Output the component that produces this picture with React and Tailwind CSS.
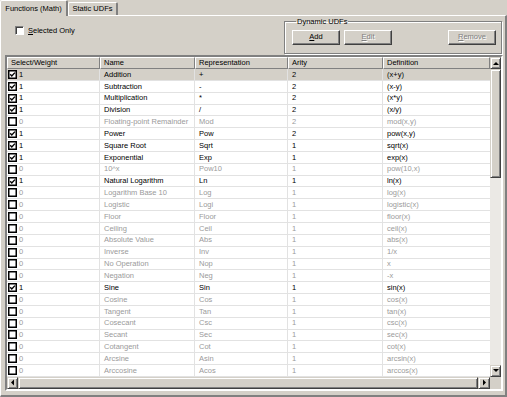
import React from "react";

const rows = [
  [1, "Addition", "+", 2, "(x+y)"],
  [1, "Subtraction", "-", 2, "(x-y)"],
  [1, "Multiplication", "*", 2, "(x*y)"],
  [1, "Division", "/", 2, "(x/y)"],
  [0, "Floating-point Remainder", "Mod", 2, "mod(x,y)"],
  [1, "Power", "Pow", 2, "pow(x,y)"],
  [1, "Square Root", "Sqrt", 1, "sqrt(x)"],
  [1, "Exponential", "Exp", 1, "exp(x)"],
  [0, "10^x", "Pow10", 1, "pow(10,x)"],
  [1, "Natural Logarithm", "Ln", 1, "ln(x)"],
  [0, "Logarithm Base 10", "Log", 1, "log(x)"],
  [0, "Logistic", "Logi", 1, "logistic(x)"],
  [0, "Floor", "Floor", 1, "floor(x)"],
  [0, "Ceiling", "Ceil", 1, "ceil(x)"],
  [0, "Absolute Value", "Abs", 1, "abs(x)"],
  [0, "Inverse", "Inv", 1, "1/x"],
  [0, "No Operation", "Nop", 1, "x"],
  [0, "Negation", "Neg", 1, "-x"],
  [1, "Sine", "Sin", 1, "sin(x)"],
  [0, "Cosine", "Cos", 1, "cos(x)"],
  [0, "Tangent", "Tan", 1, "tan(x)"],
  [0, "Cosecant", "Csc", 1, "csc(x)"],
  [0, "Secant", "Sec", 1, "sec(x)"],
  [0, "Cotangent", "Cot", 1, "cot(x)"],
  [0, "Arcsine", "Asin", 1, "arcsin(x)"],
  [0, "Arccosine", "Acos", 1, "arccos(x)"],
];

const cols = "grid grid-cols-[93px_95px_93px_95px_107px]";

function Check({ on }) {
  return (
    <svg width="9" height="9" viewBox="0 0 9 9" className="shrink-0">
      <rect x="0.75" y="0.75" width="7.5" height="7.5" fill="#fff" stroke="#000" strokeWidth="1.5" />
      {on ? <path d="M2.2 4.3 L3.8 6 L6.9 2.6" fill="none" stroke="#000" strokeWidth="1.4" /> : null}
    </svg>
  );
}

function Arrow({ dir }) {
  const d = {
    up: "M1 4 L4 1 L7 4 Z",
    down: "M1 1 L4 4 L7 1 Z",
    left: "M4 0.5 L1 3.5 L4 6.5 Z",
    right: "M1 0.5 L4 3.5 L1 6.5 Z",
  }[dir];
  const w = dir === "up" || dir === "down" ? 8 : 5;
  const h = dir === "up" || dir === "down" ? 5 : 7;
  return (
    <svg width={w} height={h} viewBox={`0 0 ${w} ${h}`}>
      <path d={d} fill="#000" />
    </svg>
  );
}

function SbButton({ dir, className = "" }) {
  return (
    <div
      className={`flex items-center justify-center bg-[#d4d0c8] border border-t-[#d4d0c8] border-l-[#d4d0c8] border-b-[#404040] border-r-[#404040] shadow-[inset_1px_1px_0_#fff,inset_-1px_-1px_0_#808080] ${className}`}
    >
      <Arrow dir={dir} />
    </div>
  );
}

function Button({ children, disabled }) {
  return (
    <button
      className={`w-[48px] h-[15px] flex items-center justify-center bg-[#d4d0c8] border border-t-white border-l-white border-b-[#404040] border-r-[#404040] shadow-[inset_-1px_-1px_0_#808080] ${
        disabled ? "text-[#808080] [text-shadow:1px_1px_0_#fff]" : "text-black"
      }`}
    >
      {children}
    </button>
  );
}

export default function App() {
  return (
    <div className="w-[507px] h-[397px] bg-[#d4d0c8] flex flex-col overflow-hidden font-['Liberation_Sans',Arial,sans-serif] text-[7.5px] leading-none text-black">
      {/* tabs */}
      <div className="h-[15px] flex items-end">
        <div className="relative z-10 w-[68px] h-[16px] -mb-[1px] flex items-center justify-center bg-[#d4d0c8] border-l border-t border-white border-r-2 border-r-[#808080] rounded-t-[2px]">
          Functions (Math)
        </div>
        <div className="w-[50px] h-[13px] flex items-center justify-center bg-[#d4d0c8] border-l border-t border-white border-r-2 border-r-[#808080] rounded-t-[2px]">
          Static UDFs
        </div>
      </div>

      {/* tab page */}
      <div className="flex-1 flex flex-col border-t border-l border-white border-r-2 border-b-2 border-r-[#808080] border-b-[#808080] pl-[4px] pr-[2px]">
        <div className="h-[39px] flex items-start">
          <label className="flex items-center gap-[4px] mt-[10px] ml-[10px]">
            <span className="w-[9px] h-[9px] bg-white border border-t-[#808080] border-l-[#808080] border-b-white border-r-white shadow-[inset_1px_1px_0_#404040]" />
            <span>
              <span className="underline">S</span>elected Only
            </span>
          </label>
          <fieldset className="ml-auto mr-[1px] mt-[2px] w-[218px] h-[36px] border border-[#808080] shadow-[1px_1px_0_#fff,inset_1px_1px_0_#fff] px-[7px] pr-[5px]">
            <legend className="ml-[4px] px-[1px]">Dynamic UDFs</legend>
            <div className="flex gap-[4px] mt-[4px]">
              <Button>
                <span className="underline">A</span>dd
              </Button>
              <Button disabled>
                <span className="underline">E</span>dit
              </Button>
              <div className="ml-auto">
                <Button disabled>
                  <span className="underline">R</span>emove
                </Button>
              </div>
            </div>
          </fieldset>
        </div>

        {/* list view */}
        <div className="w-[498px] flex flex-col border-2 border-t-[#808080] border-l-[#808080] border-b-white border-r-white shadow-[inset_1px_1px_0_#404040]">
          <div className="flex">
            <div className="flex flex-col">
              <div className={`${cols} h-[12px]`}>
                {["Select/Weight", "Name", "Representation", "Arity", "Definition"].map((h) => (
                  <div
                    key={h}
                    className="flex items-center pl-[3px] bg-[#d4d0c8] border-t border-l border-white border-r border-b border-r-[#808080] border-b-[#808080]"
                  >
                    {h}
                  </div>
                ))}
              </div>
              {rows.map(([w, name, rep, ar, def], i) => {
                const txt = w ? "text-black" : "text-[#9a9a9a]";
                const bg = i === 0 ? "bg-[#d4d0c8]" : "bg-white";
                return (
                  <div key={name} className={`${cols} h-[11.85px] ${bg} ${txt}`}>
                    <div className="flex items-center gap-[2px] pl-[1px] border-b border-r border-[#e2e2e2]">
                      <Check on={w} />
                      <span>{w}</span>
                    </div>
                    <div className="flex items-center pl-[4px] border-b border-r border-[#e2e2e2]">{name}</div>
                    <div className="flex items-center pl-[4px] border-b border-r border-[#e2e2e2]">{rep}</div>
                    <div className="flex items-center pl-[4px] border-b border-r border-[#e2e2e2]">{ar}</div>
                    <div className="flex items-center pl-[4px] border-b border-[#e2e2e2]">{def}</div>
                  </div>
                );
              })}
            </div>
            {/* vertical scrollbar */}
            <div className="w-[11px] flex flex-col">
              <SbButton dir="up" className="h-[12px]" />
              <div className="h-[109px] bg-[#d4d0c8] border border-t-[#d4d0c8] border-l-[#d4d0c8] border-b-[#404040] border-r-[#404040] shadow-[inset_1px_1px_0_#fff,inset_-1px_-1px_0_#808080]" />
              <div className="flex-1 bg-[#ebe9e5]" />
              <SbButton dir="down" className="h-[12px]" />
            </div>
          </div>
          {/* horizontal scrollbar */}
          <div className="flex h-[12px]">
            <SbButton dir="left" className="w-[11px]" />
            <div className="flex-1 bg-[#d4d0c8] border border-t-[#d4d0c8] border-l-[#d4d0c8] border-b-[#404040] border-r-[#404040] shadow-[inset_1px_1px_0_#fff,inset_-1px_-1px_0_#808080]" />
            <SbButton dir="right" className="w-[12px]" />
            <div className="w-[11px] bg-[#d4d0c8]" />
          </div>
        </div>
      </div>
    </div>
  );
}
